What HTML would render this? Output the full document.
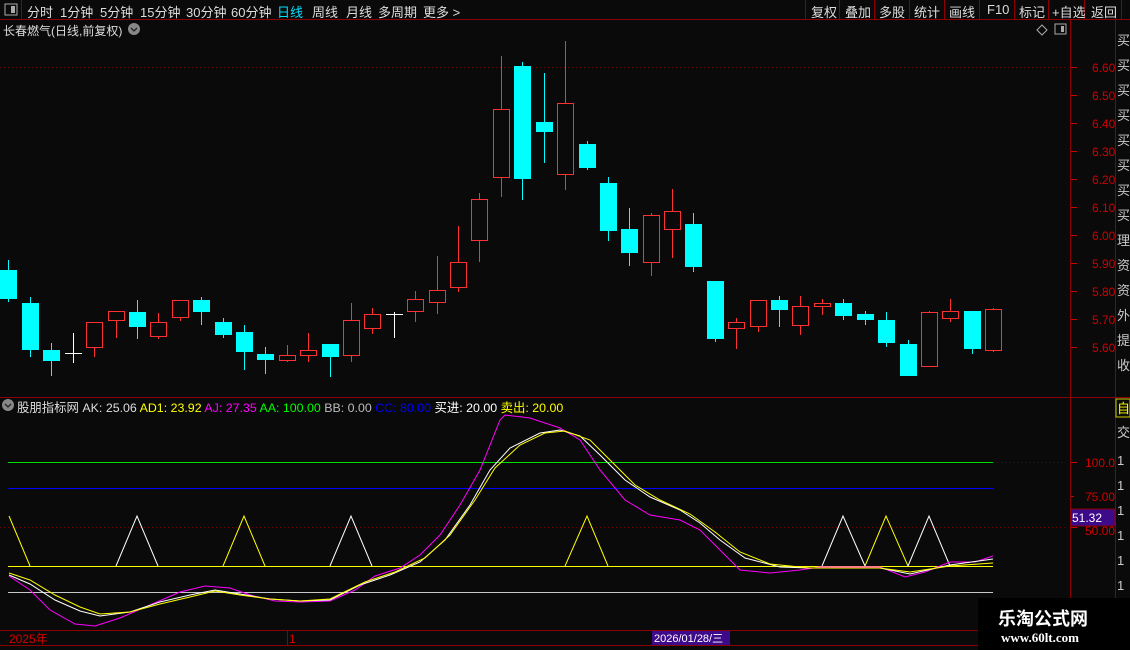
<!DOCTYPE html>
<html><head><meta charset="utf-8"><style>
body{margin:0;width:1130px;height:650px;background:#0a0a0a;overflow:hidden;font-family:"Liberation Sans","Noto Sans CJK SC",sans-serif;}
.t{position:absolute;white-space:nowrap;font-size:12px;}
.m{position:absolute;top:2px;white-space:nowrap;font-size:13px;color:#ddd;}
</style></head><body>
<div style="position:absolute;left:0;top:0;width:1130px;height:650px;">
<svg width="1130" height="650" style="position:absolute;left:0;top:0" font-family="Liberation Sans, Noto Sans CJK SC, sans-serif">
<g stroke="#8b0000" stroke-width="1" fill="none">
<line x1="0" y1="19.5" x2="1130" y2="19.5"/>
<line x1="21.5" y1="0" x2="21.5" y2="19"/>
<line x1="805.5" y1="0" x2="805.5" y2="19"/><line x1="839.5" y1="0" x2="839.5" y2="19"/><line x1="874.5" y1="0" x2="874.5" y2="19"/><line x1="909.5" y1="0" x2="909.5" y2="19"/><line x1="944.5" y1="0" x2="944.5" y2="19"/><line x1="979.5" y1="0" x2="979.5" y2="19"/><line x1="1014.5" y1="0" x2="1014.5" y2="19"/><line x1="1048.5" y1="0" x2="1048.5" y2="19"/><line x1="1084.5" y1="0" x2="1084.5" y2="19"/><line x1="1121.5" y1="0" x2="1121.5" y2="19"/>
<line x1="1070.5" y1="20" x2="1070.5" y2="630"/>
<line x1="1115.5" y1="20" x2="1115.5" y2="650"/>
<line x1="0" y1="397.5" x2="1130" y2="397.5"/>
<line x1="0" y1="630.5" x2="1130" y2="630.5"/>
<line x1="0" y1="645.5" x2="980" y2="645.5"/>
<line x1="287.5" y1="631" x2="287.5" y2="645"/>
</g>
<g stroke="#6b0000" stroke-dasharray="1,3">
<line x1="0" y1="67.5" x2="1065" y2="67.5"/>
<line x1="993" y1="462.5" x2="1065" y2="462.5"/>
<line x1="0" y1="527.5" x2="1065" y2="527.5"/>
</g>
<g fill="#d00000" font-size="12">
<text x="1092" y="72">6.60</text><text x="1092" y="100">6.50</text><text x="1092" y="128">6.40</text><text x="1092" y="156">6.30</text><text x="1092" y="184">6.20</text><text x="1092" y="212">6.10</text><text x="1092" y="240">6.00</text><text x="1092" y="268">5.90</text><text x="1092" y="296">5.80</text><text x="1092" y="324">5.70</text><text x="1092" y="352">5.60</text>
<text x="1085" y="467">100.0</text><text x="1085" y="501">75.00</text><text x="1085" y="535">50.00</text>
<text x="9" y="643">2025年</text><text x="289" y="643">1</text>
</g>
<g stroke="#d00000"><line x1="1071" y1="67.5" x2="1077" y2="67.5"/><line x1="1071" y1="95.5" x2="1077" y2="95.5"/><line x1="1071" y1="123.5" x2="1077" y2="123.5"/><line x1="1071" y1="151.5" x2="1077" y2="151.5"/><line x1="1071" y1="179.5" x2="1077" y2="179.5"/><line x1="1071" y1="207.5" x2="1077" y2="207.5"/><line x1="1071" y1="235.5" x2="1077" y2="235.5"/><line x1="1071" y1="263.5" x2="1077" y2="263.5"/><line x1="1071" y1="291.5" x2="1077" y2="291.5"/><line x1="1071" y1="319.5" x2="1077" y2="319.5"/><line x1="1071" y1="347.5" x2="1077" y2="347.5"/><line x1="1071" y1="462.5" x2="1077" y2="462.5"/><line x1="1071" y1="496.5" x2="1074" y2="496.5"/><line x1="1071" y1="527.5" x2="1077" y2="527.5"/></g>
<rect x="1071" y="509" width="44" height="17" fill="#3d0a8a" stroke="#8b0000"/>
<text x="1072" y="522" fill="#fff" font-size="12">51.32</text>
<rect x="652" y="631" width="78" height="14" fill="#3d0a8a"/>
<text x="654" y="642" fill="#fff" font-size="11">2026/01/28/三</text>
<g fill="#ccc" font-size="13"><text x="1117" y="45">买</text><text x="1117" y="70">买</text><text x="1117" y="95">买</text><text x="1117" y="120">买</text><text x="1117" y="145">买</text><text x="1117" y="170">买</text><text x="1117" y="195">买</text><text x="1117" y="220">买</text><text x="1117" y="245">理</text><text x="1117" y="270">资</text><text x="1117" y="295">资</text><text x="1117" y="320">外</text><text x="1117" y="345">提</text><text x="1117" y="370">收</text>
<text x="1117" y="437">交</text><text x="1117" y="465">1</text><text x="1117" y="490">1</text><text x="1117" y="515">1</text><text x="1117" y="540">1</text><text x="1117" y="565">1</text><text x="1117" y="590">1</text></g>
<rect x="1116" y="399" width="14" height="18" fill="none" stroke="#cc0"/><text x="1117" y="413" fill="#ff0" font-size="13">自</text>
<g id="c"></g>
<line x1="8" y1="462.5" x2="993" y2="462.5" stroke="#00e000"/>
<line x1="8" y1="488.5" x2="993" y2="488.5" stroke="#0000ff"/>
<line x1="8" y1="592.5" x2="993" y2="592.5" stroke="#c8c8c8"/>
<line x1="8" y1="566.5" x2="993" y2="566.5" stroke="#ffff00"/>
<g fill="none" stroke-width="1">
<polyline stroke="#ffff00" points="9,516 30,566"/>
<polyline stroke="#fff" points="116,566 137,516 158,566"/>
<polyline stroke="#ffff00" points="223,566 244,516 265,566"/>
<polyline stroke="#fff" points="330,566 351,516 372,566"/>
<polyline stroke="#ffff00" points="565,566 587,516 608,566"/>
<polyline stroke="#fff" points="822,566 843,516 865,566"/>
<polyline stroke="#ffff00" points="865,566 886,516 908,566"/>
<polyline stroke="#fff" points="908,566 929,516 950,566"/>
<polyline stroke="#ff00ff" points="9,576 30,590 50,610 75,624 95,626 120,618 150,605 180,592 205,586 230,588 250,595 275,601 300,602 330,601 355,590 375,576 400,568 420,555 440,535 460,505 480,470 500,420 505,415 530,418 560,428 580,440 600,470 625,500 650,515 680,520 700,530 720,550 740,570 770,573 800,570 820,567 880,567 905,577 925,572 950,562 975,562 993,556"/>
<polyline stroke="#fff" points="9,575 30,584 55,600 80,611 100,616 130,612 160,602 190,595 215,590 240,594 270,599 300,601 330,600 360,585 390,575 420,562 445,540 470,505 490,470 510,448 540,433 560,430 580,436 600,455 625,480 650,497 680,510 700,523 720,540 745,558 780,567 810,568 880,568 910,574 950,565 993,559"/>
<polyline stroke="#ffff00" points="9,573 30,580 55,595 80,607 100,614 130,612 160,604 190,597 215,591 240,595 270,599 300,601 330,599 365,582 395,572 425,558 450,535 475,500 495,468 520,445 545,433 565,431 590,440 610,460 635,485 660,500 690,514 715,532 740,552 770,564 810,568 880,568 910,572 950,566 993,563"/>
</g>
<rect x="5" y="4" width="12" height="11" fill="none" stroke="#aaa"/><rect x="11" y="6" width="4" height="7" fill="#aaa"/>
<circle cx="134" cy="29" r="6" fill="#888"/><path d="M131,28 l3,3 l3,-3" stroke="#222" fill="none" stroke-width="1.3"/>
<circle cx="8" cy="405" r="6" fill="#888"/><path d="M5,404 l3,3 l3,-3" stroke="#222" fill="none" stroke-width="1.3"/>
<path d="M1042,25 l5,5 l-5,5 l-5,-5z" fill="none" stroke="#aaa"/>
<rect x="1055" y="24" width="11" height="10" fill="none" stroke="#aaa"/><rect x="1061" y="26" width="3" height="6" fill="#aaa"/>
</svg>
<div class="m" style="left:27px">分时</div>
<div class="m" style="left:60px">1分钟</div>
<div class="m" style="left:100px">5分钟</div>
<div class="m" style="left:140px">15分钟</div>
<div class="m" style="left:186px">30分钟</div>
<div class="m" style="left:231px">60分钟</div>
<div class="m" style="left:277px;color:#00e0ff">日线</div>
<div class="m" style="left:312px">周线</div>
<div class="m" style="left:346px">月线</div>
<div class="m" style="left:378px">多周期</div>
<div class="m" style="left:423px">更多 &gt;</div>
<div class="m" style="left:811px">复权</div>
<div class="m" style="left:845px">叠加</div>
<div class="m" style="left:879px">多股</div>
<div class="m" style="left:914px">统计</div>
<div class="m" style="left:949px">画线</div>
<div class="m" style="left:987px">F10</div>
<div class="m" style="left:1019px">标记</div>
<div class="m" style="left:1052px">+自选</div>
<div class="m" style="left:1091px">返回</div>
<div class="t" style="left:3px;top:22px;color:#ddd;font-size:12px">长春燃气(日线,前复权)</div>
<div class="t" style="left:17px;top:398px;color:#ddd;font-size:12.4px">股朋指标网 <span>AK: 25.06</span> <span style="color:#ff0">AD1: 23.92</span> <span style="color:#f0f">AJ: 27.35</span> <span style="color:#0f0">AA: 100.00</span> <span style="color:#bbb">BB: 0.00</span> <span style="color:#00f">CC: 80.00</span> <span style="color:#fff">买进: 20.00</span> <span style="color:#ff0">卖出: 20.00</span></div>
<div style="position:absolute;left:978px;top:598px;width:152px;height:52px;background:#000"></div>
<div class="t" style="left:998px;top:605px;color:#fff;font-size:18px;font-weight:bold">乐淘公式网</div>
<div class="t" style="left:1001px;top:630px;color:#fff;font-size:13px;font-weight:bold;font-family:'Liberation Serif',serif">www.60lt.com</div>
</div>
<script>
var d=[[8,'c',270,299,260,302],[30,'c',303,350,297,357],[51,'c',350,361,343,376],[73,'w',353,355,333,363],[94,'r',322,347,322,357],[116,'r',311,320,311,338],[137,'c',312,327,300,339],[158,'r',322,336,313,339],[180,'r',300,317,300,321],[201,'c',300,312,297,325],[223,'c',322,335,318,338],[244,'c',332,352,325,370],[265,'c',354,360,347,374],[287,'r',355,360,345,362],[308,'r',350,355,333,362],[330,'c',344,357,344,377],[351,'r',320,355,303,362],[372,'r',314,328,308,334],[394,'w',314,315,312,338],[415,'r',299,311,291,322],[437,'r',290,302,256,314],[458,'r',262,287,226,292],[479,'r',199,240,193,262],[501,'r',109,177,56,197],[522,'c',66,179,62,200],[544,'c',122,132,73,163],[565,'r',103,174,41,190],[587,'c',144,168,141,170],[608,'c',183,231,177,241],[629,'c',229,253,208,266],[651,'r',215,262,213,276],[672,'r',211,229,189,258],[693,'c',224,267,213,272],[715,'c',281,339,281,342],[736,'r',322,328,318,349],[758,'r',300,326,300,332],[779,'c',300,310,296,327],[800,'r',306,325,296,335],[822,'r',303,306,299,315],[843,'c',303,316,299,320],[865,'c',314,320,311,325],[886,'c',320,343,312,347],[908,'c',344,376,340,376],[929,'r',312,366,311,366],[950,'r',311,318,299,322],[972,'c',311,349,311,354],[993,'r',309,350,308,352]];
var s='';d.forEach(function(a){var x=a[0],col=a[1]=='c'?'#00ffff':a[1]=='r'?'#ff3030':'#ffffff';
s+='<line x1="'+(x+.5)+'" y1="'+a[4]+'" x2="'+(x+.5)+'" y2="'+a[5]+'" stroke="'+col+'"/>';
var h=Math.max(a[3]-a[2],1);
if(a[1]=='c')s+='<rect x="'+(x-8)+'" y="'+a[2]+'" width="17" height="'+h+'" fill="'+col+'"/>';
else if(a[1]=='r')s+='<rect x="'+(x-7.5)+'" y="'+(a[2]+.5)+'" width="16" height="'+h+'" fill="#0a0a0a" stroke="'+col+'"/>';
else s+='<line x1="'+(x-8)+'" y1="'+(a[2]+.5)+'" x2="'+(x+9)+'" y2="'+(a[2]+.5)+'" stroke="'+col+'"/>';});
document.getElementById('c').innerHTML=s;
</script>
</body></html>
